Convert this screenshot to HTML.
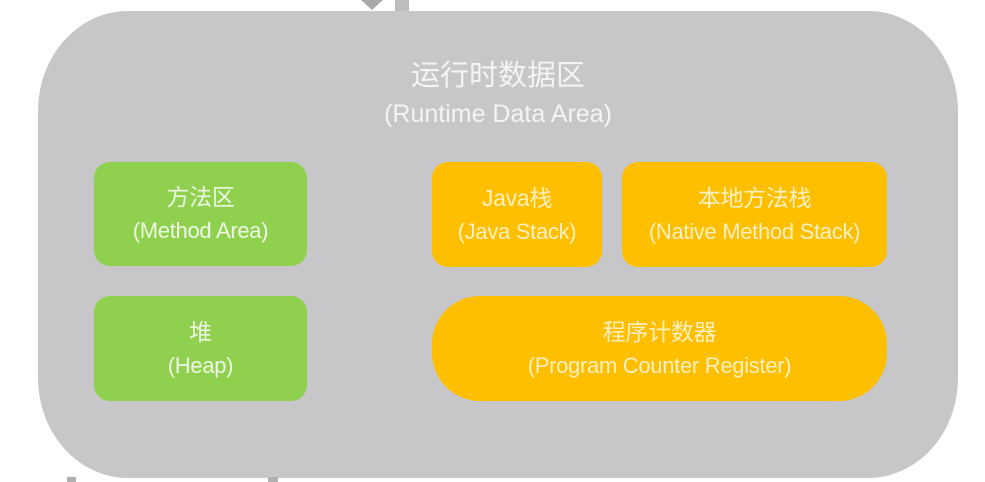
<!DOCTYPE html>
<html><head><meta charset="utf-8"><style>
body{margin:0;width:985px;height:482px;background:#fff;position:relative;overflow:hidden;font-family:"Liberation Sans","Noto Sans CJK SC",sans-serif}
.a{position:absolute}
.big{left:38px;top:11px;width:920px;height:467px;background:#c7c7c9;border-radius:90px/100px}
.b{position:absolute;display:flex;flex-direction:column;align-items:center;justify-content:center;font-size:22px;line-height:34px;text-align:center;letter-spacing:-0.3px}
.b span.c{font-size:23px}
.g{background:#8fd14f;color:#eef7e2;border-radius:16px}
.o{background:#fdbf00;color:#fcefc0;border-radius:16px}
.t{left:38px;width:920px;top:56px;color:#f4f4f4;text-align:center}
.t .c{font-size:29px;line-height:40px;display:block}
.t .e{font-size:25px;line-height:36px;display:block}
</style></head><body>
<div class="a" style="left:395px;top:0;width:14px;height:14px;background:#bdbdbf"></div>
<div class="a" style="left:361px;top:0;width:0;height:0;border-left:11px solid transparent;border-right:11px solid transparent;border-top:10px solid #a9a9ab"></div>
<div class="a big"></div>
<div class="a" style="left:67px;top:477px;width:9px;height:5px;background:#b0b0b2"></div>
<div class="a" style="left:268px;top:477px;width:10px;height:5px;background:#b0b0b2"></div>
<div class="a t"><span class="c">运行时数据区</span><span class="e">(Runtime Data Area)</span></div>
<div class="b g" style="left:94px;top:162px;width:213px;height:104px"><span class="c">方法区</span>(Method Area)</div>
<div class="b g" style="left:94px;top:296px;width:213px;height:105px"><span class="c">堆</span>(Heap)</div>
<div class="b o" style="left:432px;top:162px;width:170px;height:105px"><span class="c">Java栈</span>(Java Stack)</div>
<div class="b o" style="left:622px;top:162px;width:265px;height:105px"><span class="c">本地方法栈</span>(Native Method Stack)</div>
<div class="b o" style="left:432px;top:296px;width:455px;height:105px;border-radius:48px"><span class="c">程序计数器</span>(Program Counter Register)</div>
</body></html>
